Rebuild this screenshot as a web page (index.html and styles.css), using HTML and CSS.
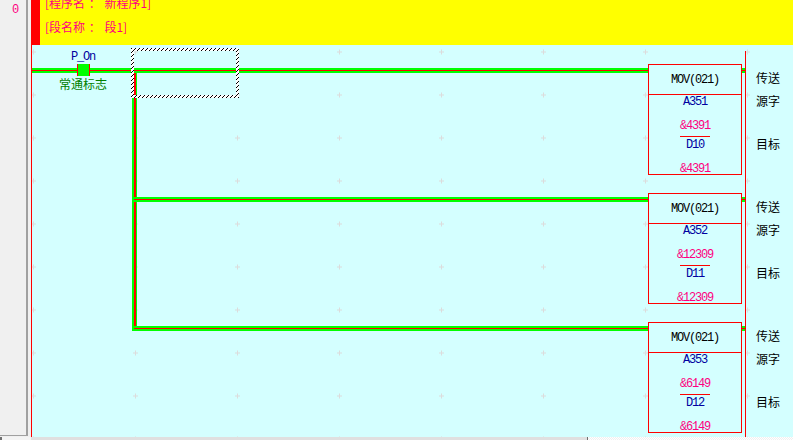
FILE: index.html
```html
<!DOCTYPE html>
<html lang="zh">
<head>
<meta charset="utf-8">
<title>梯形图</title>
<link rel="stylesheet" href="styles.css">
</head>
<body>
<div class="app">
  <div class="workspace">
    <aside class="gutter"><span class="rung-no">0</span></aside>
    <main class="main">
      <header class="banner">
        <div class="banner-line banner-line-first">[程序名 ： 新程序1]</div>
        <div class="banner-line">[段名称 ： 段1]</div>
      </header>
      <section class="canvas">
        <svg class="grid" width="761" height="392" aria-hidden="true">
          <defs>
            <pattern id="dots" x="-1" y="4" width="102" height="43" patternUnits="userSpaceOnUse">
              <path d="M2 0.5h1v2h2v1h-2v2h-1v-2h-2v-1h2z" fill="#dcdcdc"/>
            </pattern>
          </defs>
          <rect width="761" height="392" fill="url(#dots)"/>
        </svg>

        <div class="wire wire-v"></div>
        <div class="wire wire-h wire-1"></div>
        <div class="wire wire-h wire-2"></div>
        <div class="wire wire-h wire-3"></div>
        <div class="rail"></div>

        <div class="contact">
          <div class="contact-name">P_On</div>
          <div class="contact-box"></div>
          <div class="contact-note">常通标志</div>
        </div>

        <div class="selection"></div>

        <div class="output output-1">
          <div class="block">
            <div class="block-head">MOV(021)</div>
            <div class="block-body">
              <div class="op">A351</div>
              <div class="val val-gap">&amp;4391</div>
              <div class="rule"></div>
              <div class="op">D10</div>
              <div class="val val-gap">&amp;4391</div>
            </div>
          </div>
          <div class="labels"><div>传送</div><div class="label-src">源字</div><div class="label-dst">目标</div></div>
        </div>

        <div class="output output-2">
          <div class="block">
            <div class="block-head">MOV(021)</div>
            <div class="block-body">
              <div class="op">A352</div>
              <div class="val val-gap">&amp;12309</div>
              <div class="rule"></div>
              <div class="op">D11</div>
              <div class="val val-gap">&amp;12309</div>
            </div>
          </div>
          <div class="labels"><div>传送</div><div class="label-src">源字</div><div class="label-dst">目标</div></div>
        </div>

        <div class="output output-3">
          <div class="block">
            <div class="block-head">MOV(021)</div>
            <div class="block-body">
              <div class="op">A353</div>
              <div class="val val-gap">&amp;6149</div>
              <div class="rule"></div>
              <div class="op">D12</div>
              <div class="val val-gap">&amp;6149</div>
            </div>
          </div>
          <div class="labels"><div>传送</div><div class="label-src">源字</div><div class="label-dst">目标</div></div>
        </div>
      </section>
    </main>
  </div>
  <footer class="statusbar">
    <div class="status-left"></div>
    <div class="status-track"></div>
    <div class="status-thumb"></div>
  </footer>
</div>
</body>
</html>
```

FILE: styles.css
```css
* { box-sizing: border-box; }

html, body {
  margin: 0;
  padding: 0;
  width: 793px;
  height: 440px;
  overflow: hidden;
  background: #f0f0f0;
  font-family: "Noto Sans CJK SC", "Liberation Sans", sans-serif;
  font-size: 12px;
  line-height: 12px;
}

.app {
  display: flex;
  flex-direction: column;
  height: 440px;
}

.workspace {
  display: flex;
  height: 437px;
}

.gutter {
  width: 31px;
  height: 437px;
  flex: none;
  padding-top: 4px;
  background:
    linear-gradient(#a0a0a0, #a0a0a0) 0 435px / 28px 1px no-repeat,
    linear-gradient(#a0a0a0, #a0a0a0) 26px 0 / 2px 436px no-repeat,
    #f0f0f0;
}

.rung-no {
  display: block;
  width: 26px;
  padding-left: 12px;
  font-family: "Liberation Mono", monospace;
  font-size: 12px;
  color: #ff0080;
}

.main {
  flex: 1;
  display: flex;
  flex-direction: column;
  border-left: 1px solid #ff0000;
  background: #d4ffff;
}

.banner {
  height: 45px;
  flex: none;
  overflow: hidden;
  background: #ffff00;
  border-left: 8px solid #ff0000;
  padding: 0 0 0 5px;
  color: #ff0080;
}

.banner-line {
  height: 12px;
  margin-top: 12px;
  word-spacing: 1px;
  white-space: pre;
}

.banner-line-first {
  margin-top: -3px;
}

.canvas {
  position: relative;
  flex: 1;
  overflow: hidden;
}

.grid {
  position: absolute;
  left: 0;
  top: 0;
}

.wire {
  position: absolute;
  background: #00ff00;
}

.wire::after {
  content: "";
  position: absolute;
  background: #ff0000;
}

.wire-h {
  height: 5px;
  width: 713px;
}

.wire-h::after {
  left: 0;
  right: 0;
  top: 2px;
  height: 1px;
}

.wire-1 { left: 0; top: 23px; }
.wire-2 { left: 102px; top: 152px; width: 611px; }
.wire-3 { left: 102px; top: 281px; width: 611px; }

.wire-v {
  left: 100px;
  top: 23px;
  width: 5px;
  height: 263px;
}

.wire-v::after {
  left: 2px;
  width: 2px;
  top: 2px;
  bottom: 2px;
}

.rail {
  position: absolute;
  left: 713px;
  top: 6px;
  width: 1px;
  height: 386px;
  background: #ff0000;
}

.contact {
  position: absolute;
  left: 27px;
  top: 6px;
  width: 48px;
  text-align: center;
}

.contact-name {
  height: 13px;
  font-family: "Liberation Mono", monospace;
  font-size: 12px;
  letter-spacing: -1.2px;
  color: #0000a0;
}

.contact-box {
  width: 13px;
  height: 12px;
  margin: 0 auto;
  background: #00ff00;
  border-left: 1px solid #ff0000;
  border-right: 1px solid #ff0000;
}

.contact-note {
  margin-top: 2px;
  color: #008000;
}

.selection {
  position: absolute;
  left: 99px;
  top: 3px;
  width: 108px;
  height: 50px;
  border: 3px solid #000;
  border-image: repeating-linear-gradient(135deg, #000 0 1px, #fff 1px 2.83px) 3;
}

.output {
  position: absolute;
  left: 616px;
  display: flex;
}

.output-1 { top: 19px; }
.output-2 { top: 148px; }
.output-3 { top: 277px; }

.block {
  width: 94px;
  height: 111px;
  flex: none;
  border: 1px solid #ff0000;
  background: #d4ffff;
  font-family: "Liberation Mono", monospace;
  font-size: 12px;
  letter-spacing: -1.2px;
  text-align: center;
}

.block-head {
  height: 30px;
  padding-top: 9px;
  border-bottom: 1px solid #ff0000;
  color: #000;
}

.block-body {
  display: flex;
  flex-direction: column;
  align-items: center;
  padding-top: 1px;
}

.op { color: #0000a0; height: 12px; }
.val { color: #ff0080; height: 12px; }
.val-gap { margin-top: 12px; }

.rule {
  width: 30px;
  height: 1px;
  margin-top: 4px;
  margin-bottom: 2px;
  background: #ff0000;
}

.labels {
  margin-left: 14px;
  padding-top: 8px;
  color: #000;
}

.label-src { margin-top: 11px; }
.label-dst { margin-top: 31px; }

.statusbar {
  height: 3px;
  position: relative;
  display: flex;
  background: #f0f0f0;
}

.status-left {
  width: 31px;
  background: #f4f4f4;
  border-left: 2px solid #707070;
}

.status-track {
  width: 556px;
  background: #e0e0e0;
}

.status-thumb {
  flex: 1;
  border-left: 1px solid #707070;
  background: repeating-conic-gradient(#f0f0f0 0 25%, #ffffff 0 50%) 0 0 / 2px 2px;
}
```
